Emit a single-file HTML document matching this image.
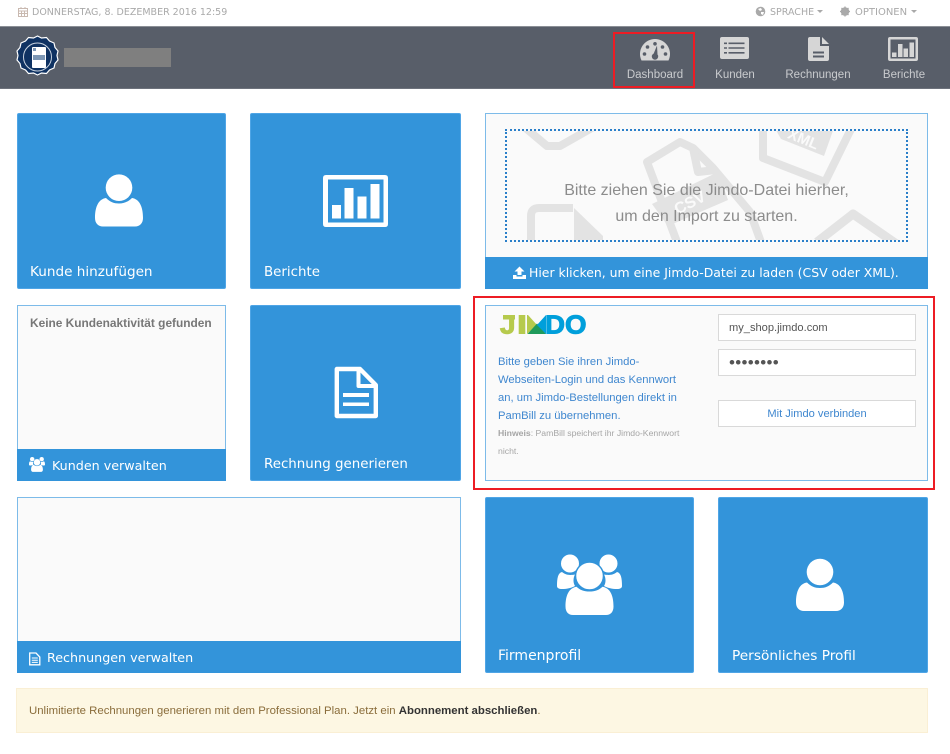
<!DOCTYPE html>
<html lang="de"><head><meta charset="utf-8"><title>PamBill</title>
<style>
*{box-sizing:border-box}
html,body{margin:0;padding:0;background:#fff}
body{width:950px;height:754px;position:relative;overflow:hidden;font-family:"Liberation Sans",sans-serif}
.a{position:absolute}
.tile{position:absolute;background:#3394da;border:1px solid #4fa5e6;border-radius:2px}
.lbl{position:absolute;color:#fff;font-family:"DejaVu Sans",sans-serif;font-size:13.6px;line-height:18px;white-space:nowrap}
.card{position:absolute;background:#fafafa;border:1px solid #7dbbe9}
.bar{position:absolute;background:#3394da}
.nav{position:absolute;top:68px;color:#c9cbce;font-size:11.5px;line-height:14px;text-align:center;white-space:nowrap}
.top{position:absolute;top:6px;color:#a9a9a9;font-family:"DejaVu Sans",sans-serif;font-size:9.5px;line-height:14px;white-space:nowrap}
.inp{position:absolute;left:718px;width:198px;height:27px;background:#fff;border:1px solid #d9d9d9;font-size:11.1px;line-height:26px;color:#555;padding-left:10px}
svg{position:absolute;left:0;top:0;overflow:visible}
</style></head><body>

<div class="top" style="left:32px">DONNERSTAG, 8. DEZEMBER 2016 12:59</div>
<div class="top" style="left:770px">SPRACHE</div>
<div class="top" style="left:855px;font-size:10px">OPTIONEN</div>

<div class="a" style="left:0;top:26px;width:950px;height:63px;background:#585e69;border-top:1px solid #8b8f96;border-bottom:1px solid #6d727c"></div>
<div class="a" style="left:64px;top:48px;width:107px;height:19px;background:#7f7f7f"></div>
<div class="a" style="left:613px;top:32px;width:82px;height:56px;border:2px solid #ed1c24"></div>
<div class="nav" style="left:613px;width:84px">Dashboard</div>
<div class="nav" style="left:705px;width:60px">Kunden</div>
<div class="nav" style="left:778px;width:80px">Rechnungen</div>
<div class="nav" style="left:874px;width:60px">Berichte</div>

<!-- tiles -->
<div class="tile" style="left:17px;top:113px;width:209px;height:176px"></div>
<div class="lbl" style="left:30px;top:263px">Kunde hinzufügen</div>
<div class="tile" style="left:250px;top:113px;width:211px;height:176px"></div>
<div class="lbl" style="left:264px;top:264px;font-size:13.4px">Berichte</div>

<div class="card" style="left:485px;top:113px;width:443px;height:176px"></div>

<svg width="950" height="754" viewBox="0 0 950 754">
<defs><clipPath id="dz"><rect x="507" y="131" width="399" height="109"/></clipPath></defs>
<g clip-path="url(#dz)">
<g fill="none" stroke="#e3e3e3" stroke-width="8" stroke-linejoin="round">
<path d="M677 242L647 162L680 142L693 148L713 168L750 212L762 245"/>
<path d="M693 148L698 172L716 170"/>
<path d="M763 125L763 158L825 182L853 125"/>
<path d="M522 125L547 146H560L597 125"/>
<path d="M531 245V216Q531 208 539 208H573"/>
<path d="M817 242L853 214L898 245" stroke-width="9"/>
</g>
<g fill="#e3e3e3">
<path d="M652 204L718 172L728 200L668 226Z"/>
<path d="M773 125L835 125L824 156L781 139Z"/>
<path d="M574 208L603 236V245H574Z"/>
<path d="M520 125H538L535 137Z"/>
</g>
<text x="690" y="208" transform="rotate(-27 690 203)" text-anchor="middle" font-family="Liberation Sans" font-weight="bold" font-size="16" fill="#fafafa">CSV</text>
<text x="803" y="144" transform="rotate(22 803 140)" text-anchor="middle" font-family="Liberation Sans" font-weight="bold" font-size="15" fill="#fafafa">XML</text>
</g>
</svg>

<div class="a" style="left:505px;top:129px;width:403px;height:113px;border:2px dotted #2a7fc9"></div>
<div class="a" style="left:506px;top:178px;width:401px;text-align:center;color:#8c8c8c;font-size:16px;line-height:26px">Bitte ziehen Sie die Jimdo-Datei hierher,<br>um den Import zu starten.</div>
<div class="bar" style="left:485px;top:257px;width:443px;height:32px"></div>
<div class="lbl" style="left:529px;top:264px;font-size:12.45px">Hier klicken, um eine Jimdo-Datei zu laden (CSV oder XML).</div>

<div class="card" style="left:17px;top:305px;width:209px;height:176px"></div>
<div class="a" style="left:30px;top:316px;color:#777;font-size:11.9px;line-height:15px;font-weight:bold;white-space:nowrap">Keine Kundenaktivität gefunden</div>
<div class="bar" style="left:17px;top:449px;width:209px;height:32px"></div>
<div class="lbl" style="left:52px;top:457px;font-size:12.7px">Kunden verwalten</div>

<div class="tile" style="left:250px;top:305px;width:211px;height:176px"></div>
<div class="lbl" style="left:264px;top:456px;font-size:13.4px">Rechnung generieren</div>

<div class="a" style="left:473px;top:296px;width:462px;height:194px;border:2px solid #ed1c24"></div>
<div class="card" style="left:485px;top:305px;width:443px;height:176px"></div>
<div class="a" style="left:498px;top:353px;width:205px;color:#3f87cf;font-size:11.25px;line-height:18px">Bitte geben Sie ihren Jimdo-<br>Webseiten-Login und das Kennwort<br>an, um Jimdo-Bestellungen direkt in<br>PamBill zu übernehmen.</div>
<div class="a" style="left:498px;top:424px;width:205px;color:#a5a5a5;font-size:8.67px;line-height:18px"><b>Hinweis</b>: PamBill speichert ihr Jimdo-Kennwort<br>nicht.</div>
<div class="inp" style="top:314px">my_shop.jimdo.com</div>
<div class="inp" style="top:349px;font-size:17px;letter-spacing:.3px;line-height:25px">••••••••</div>
<div class="inp" style="top:400px;padding:0;text-align:center;color:#3f87cf">Mit Jimdo verbinden</div>

<div class="card" style="left:17px;top:497px;width:444px;height:176px"></div>
<div class="bar" style="left:17px;top:641px;width:444px;height:32px"></div>
<div class="lbl" style="left:47px;top:649px;font-size:12.7px">Rechnungen verwalten</div>

<div class="tile" style="left:485px;top:497px;width:209px;height:176px"></div>
<div class="lbl" style="left:498px;top:647px;font-size:14px">Firmenprofil</div>
<div class="tile" style="left:718px;top:497px;width:210px;height:176px"></div>
<div class="lbl" style="left:732px;top:647px;font-size:13.7px">Persönliches Profil</div>

<div class="a" style="left:16px;top:688px;width:912px;height:45px;background:#fdf7e3;border:1px solid #faefd4;color:#8a6d3b;font-size:11.4px;line-height:45px;padding-left:12px;white-space:nowrap">Unlimitierte Rechnungen generieren mit dem Professional Plan. Jetzt ein <b style="color:#333">Abonnement abschließen</b>.</div>

<svg width="950" height="754" viewBox="0 0 950 754" style="pointer-events:none">
<defs>
<path id="person" d="M95 218C95 206 99 199 106 198C110 202 114 203.500 119 203.500C124 203.500 128 202 132 198C139 199 143 206 143 218C143 223 140 226.500 135 226.500H103C98 226.500 95 223 95 218Z"/>
<g id="group">
<circle cx="570" cy="563.500" r="9"/><circle cx="608.500" cy="563.500" r="9"/>
<path d="M557 586C557 578 558 573 562 572C566 575 569 575.500 575 574.500C573 578 573 583 575 586C571 588 567 589 562 589C559 589 557 588 557 586Z"/>
<path d="M622 586C622 578 621 573 617 572C613 575 610 575.500 604 574.500C606 578 606 583 604 586C608 588 612 589 617 589C620 589 622 588 622 586Z"/>
<circle cx="589.500" cy="576" r="14" stroke="#3394da" stroke-width="1.500"/>
<path d="M565.500 606.500C565.500 595 569 588 576.500 586.700C580 590 584 591.500 589.500 591.500C595 591.500 599 590 602.500 586.700C610 588 613.500 595 613.500 606.500C613.500 612 610.500 615 606 615H573C568.500 615 565.500 612 565.500 606.500Z"/>
</g>
</defs>

<!-- top icons -->
<g fill="none" stroke="#c9b9b0" stroke-width="1">
<rect x="18.500" y="8.500" width="9" height="8"/><path d="M18.500 11H27.500M21 7V9M25 7V9M21.500 11V16.500M24.500 11V16.500M18.500 13.500H27.500"/>
</g>
<circle cx="760.500" cy="11.500" r="4.800" fill="#a9a9a9"/>
<path d="M758 9l3-1 1 2-2 1zM761 12l3 0-1 3-2-1z" fill="#fff"/>
<path d="M817 10h6l-3 3Z" fill="#a9a9a9"/>
<circle cx="845" cy="11.500" r="3" fill="none" stroke="#a9a9a9" stroke-width="2.600"/>
<path d="M845 6.500v10M840 11.500h10M841.500 8l7 7M848.500 8l-7 7" stroke="#a9a9a9" stroke-width="1.300"/>
<path d="M911 10h6l-3 3Z" fill="#a9a9a9"/>

<!-- logo -->
<path d="M37.500 36l4 2 5-.5 3 3.500 4.500 2 1 4.500 3 3.500-1 4.500 1 4.500-3 3.500-1 4.500-4.500 2-3 3.500-5-.5-4 2-4-2-5 .5-3-3.500-4.500-2-1-4.500-3-3.500 1-4.500-1-4.500 3-3.500 1-4.500 4.500-2 3-3.500 5 .5Z" fill="#0f3262" stroke="#fff" stroke-width="1.200"/>
<circle cx="37.500" cy="57" r="14" fill="none" stroke="#c9d3df" stroke-width="1"/>
<rect x="32" y="47" width="14" height="21" rx="1" fill="#fff"/>
<rect x="33" y="55" width="12" height="5" fill="#7d97b5"/>
<rect x="33" y="48" width="3" height="3" fill="#7d97b5"/>

<!-- nav icons -->
<g fill="#d6d6d6">
<path d="M641.500 60.500A15 15 0 1 1 668.500 60.500Z"/>
<g fill="#585e69"><circle cx="644.500" cy="54" r="1.800"/><circle cx="647.500" cy="47" r="1.800"/><circle cx="655" cy="43.800" r="1.800"/><circle cx="662.500" cy="47" r="1.800"/><circle cx="665.500" cy="54" r="1.800"/>
<path d="M653.500 54L657 45.500L657.500 54.500Z"/><circle cx="655" cy="56.500" r="3.200"/></g>

<rect x="720" y="37" width="29" height="22" rx="2"/>
<path d="M724 42.500h3v1.600h-3zM724 47.200h3v1.600h-3zM724 52h3v1.600h-3zM728.500 42.500h16v1.600h-16zM728.500 47.200h16v1.600h-16zM728.500 52h16v1.600h-16z" fill="#585e69"/>

<path d="M808 39Q808 37 810 37H820V46H829V59Q829 61 827 61H810Q808 61 808 59Z"/>
<path d="M822 37L829 44H822Z"/>
<path d="M813 51.500H824V53.500H813ZM813 55.500H824V57.500H813Z" fill="#585e69"/>

<path fill-rule="evenodd" d="M890 37H916Q918 37 918 39V59Q918 61 916 61H890Q888 61 888 59V39Q888 37 890 37ZM890.500 39.500V58.500H915.500V39.500Z"/>
<path d="M892 52.500h4.500v4.500h-4.500zM898 44h4.500v13h-4.500zM903.500 48.500h4.500v8.500h-4.500zM909.500 42.500h4.500v14.500h-4.500z"/>
</g>

<!-- tile icons -->
<g fill="#fff">
<circle cx="119" cy="187.700" r="13.300"/><use href="#person"/>

<path fill-rule="evenodd" d="M326 175H385Q388 175 388 178V224Q388 227 385 227H326Q323 227 323 224V178Q323 175 326 175ZM328 179.500V222.500H383.500V179.500Z"/>
<path d="M332 205h9v13.500h-9zM344.500 188h9v30.500h-9zM357.500 196.500h9v22h-9zM370.500 184h9v34.500h-9z"/>

<circle cx="820" cy="572" r="13.300"/><use href="#person" x="701" y="384.500"/>

<use href="#group"/>
<g transform="translate(29,457) scale(.246) translate(-557,-554.500)"><use href="#group"/></g>
</g>

<g fill="none" stroke="#fff" stroke-width="4.400" stroke-linejoin="round">
<path d="M336.800 369H360L375.800 385V416H336.800Z"/>
<path d="M358.500 369V386H375.800" stroke-width="4"/>
</g>
<path d="M343 393h26v4h-26zM343 402.500h26v3.500h-26z" fill="#fff"/>

<!-- small bar icons -->
<g fill="#fff">
<path d="M519.500 266.500L524.500 271.500H521.500V275H517.500V271.500H514.500Z"/>
<path d="M513 275H516.500V276.500H522.500V275H526V279H513Z"/>
</g>
<g fill="none" stroke="#fff" stroke-width="1.300">
<path d="M29.700 653H36L39.800 657V664.800H29.700Z"/>
<path d="M31.800 658H37.800M31.800 660.200H37.800M31.800 662.400H37.800" stroke-width="1"/>
</g>

<!-- Jimdo logo -->
<g font-family="Liberation Sans,sans-serif" font-weight="bold" font-size="26" stroke-width="1">
<text x="500" y="333.600" fill="#b6ca4d" stroke="#b6ca4d" textLength="15.500" lengthAdjust="spacingAndGlyphs">J</text>
<text x="517" y="333.600" fill="#b6ca4d" stroke="#b6ca4d" textLength="10" lengthAdjust="spacingAndGlyphs">I</text>
<text x="545" y="333.600" fill="#009fdb" stroke="#009fdb" textLength="20" lengthAdjust="spacingAndGlyphs">D</text>
<text x="565" y="333.600" fill="#009fdb" stroke="#009fdb" textLength="21.500" lengthAdjust="spacingAndGlyphs">O</text>
</g>
<rect x="503" y="315" width="12" height="4.500" fill="#b6ca4d"/>
<path d="M527 315H528L537 325L527 334Z" fill="#b6ca4d"/>
<path d="M527.500 334L537 323.500L546 334Z" fill="#1f9a5b"/>
<path d="M537 325L546 315V334Z" fill="#009fdb"/>
</svg>

</body></html>
